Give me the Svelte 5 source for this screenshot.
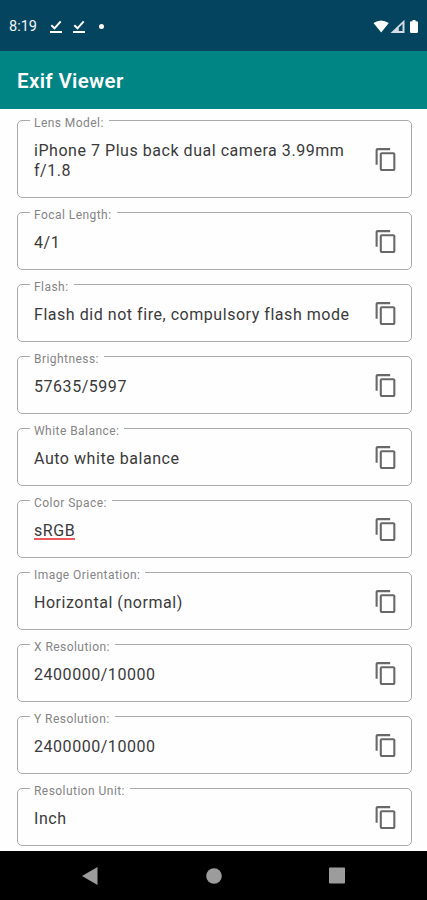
<script>
    const fields = [
        { label: "Lens Model:", value: "iPhone 7 Plus back dual camera 3.99mm f/1.8", tall: true },
        { label: "Focal Length:", value: "4/1" },
        { label: "Flash:", value: "Flash did not fire, compulsory flash mode" },
        { label: "Brightness:", value: "57635/5997" },
        { label: "White Balance:", value: "Auto white balance" },
        { label: "Color Space:", value: "sRGB", misspelled: true },
        { label: "Image Orientation:", value: "Horizontal (normal)" },
        { label: "X Resolution:", value: "2400000/10000" },
        { label: "Y Resolution:", value: "2400000/10000" },
        { label: "Resolution Unit:", value: "Inch" },
    ];
</script>

<div class="screen">
    <div class="status">
        <span class="time">8:19</span>
        {#each [1, 2] as n (n)}
            <svg class="done" width="12" height="14" viewBox="0 0 12 14">
                <path d="M1.3 5.3 4.5 8.3 10.7 1.4" fill="none" stroke="#fff" stroke-width="2" />
                <path d="M0 11h12v2H0z" fill="#fff" />
            </svg>
        {/each}
        <span class="dot"></span>
        <svg class="signals" width="48" height="16" viewBox="0 0 48 16">
            <path d="M0.5 4Q8 -1.2 15.8 4L8.2 13.6z" fill="#fff" />
            <path d="M17.5 14 31.5 .8V14z" fill="#d3dce4" />
            <path d="M25.8 8.5 29.5 5V12h-3.7z" fill="#05445e" />
            <path
                d="M39.5 1h3v1.2h1.3q1.2 0 1.2 1.2v9.4q0 1.2-1.2 1.2h-5.6q-1.2 0-1.2-1.2V3.4q0-1.2 1.2-1.2h1.3z"
                fill="#fff"
            />
        </svg>
    </div>

    <header>Exif Viewer</header>

    <main>
        {#each fields as field (field.label)}
            <div class="field" class:tall={field.tall}>
                <span class="label">{field.label}</span>
                <div class="value">
                    <span class:misspelled={field.misspelled}>{field.value}</span>
                </div>
                <svg class="copy" viewBox="0 0 24 24">
                    <path
                        d="M16 1H4c-1.1 0-2 .9-2 2v14h2V3h12V1zm3 4H8c-1.1 0-2 .9-2 2v14c0 1.1.9 2 2 2h11c1.1 0 2-.9 2-2V7c0-1.1-.9-2-2-2zm0 16H8V7h11v14z"
                    />
                </svg>
            </div>
        {/each}
    </main>

    <nav>
        <svg width="16" height="18" viewBox="0 0 16 18"><path d="M0 9 15.5 0v18z" /></svg>
        <svg width="16" height="16" viewBox="0 0 16 16"><circle cx="8" cy="8" r="7.8" /></svg>
        <svg width="16" height="17" viewBox="0 0 16 17"><rect y=".5" width="16" height="16" rx=".8" /></svg>
    </nav>
</div>

<style>
    :global(body) {
        background: #fff;
    }
    .screen {
        display: flex;
        flex-direction: column;
        height: 900px;
        overflow: hidden;
        background: #fefefe;
        font-family: Roboto, "Liberation Sans", sans-serif;
    }

    .status {
        display: flex;
        align-items: center;
        flex: none;
        box-sizing: border-box;
        height: 51px;
        padding: 2px 6px 0 9px;
        background: #05445e;
        color: #f2f6f8;
    }
    .time {
        width: 32px;
        font-size: 14.5px;
    }
    .done {
        margin-left: 9px;
    }
    .done + .done {
        margin-left: 11px;
    }
    .dot {
        width: 5px;
        height: 5px;
        margin-left: 14px;
        border-radius: 50%;
        background: #fff;
    }
    .signals {
        margin-left: auto;
    }

    header {
        flex: none;
        height: 58px;
        background: #008584;
        color: #fff;
        font-size: 20.5px;
        font-weight: 600;
        line-height: 60px;
        letter-spacing: 0.35px;
        padding-left: 17px;
    }

    main {
        display: flex;
        flex: 1;
        flex-direction: column;
        gap: 14px;
        min-height: 0;
        padding: 12px 15px 0 17px;
        padding-top: 11px;
    }
    .field {
        position: relative;
        display: flex;
        align-items: center;
        flex: none;
        box-sizing: border-box;
        height: 58px;
        padding: 0 12px 0 16px;
        border: 1px solid #aaa;
        border-radius: 5px;
    }
    .tall {
        height: 78px;
    }
    /* sits on the outline and cuts the notch in it */
    .label {
        position: absolute;
        top: -6px;
        left: 12px;
        padding: 0 5px 0 4px;
        background: #fefefe;
        color: #858585;
        font-size: 12px;
        line-height: 16px;
        letter-spacing: 0.45px;
        white-space: nowrap;
    }
    .value {
        flex: 1;
        align-self: flex-start;
        margin-top: 20px;
        color: #3a3a3a;
        font-size: 16px;
        line-height: 19.5px;
        letter-spacing: 0.54px;
    }
    .misspelled {
        display: inline-block;
        height: 17px;
        border-bottom: 2px solid #ee5a5c;
    }
    .copy {
        flex: none;
        width: 26px;
        height: 25px;
        fill: #686868;
    }

    nav {
        display: flex;
        align-items: center;
        justify-content: space-between;
        flex: none;
        box-sizing: border-box;
        height: 49px;
        padding: 0 82px;
        background: #000;
        fill: #9c9c9c;
    }
</style>
